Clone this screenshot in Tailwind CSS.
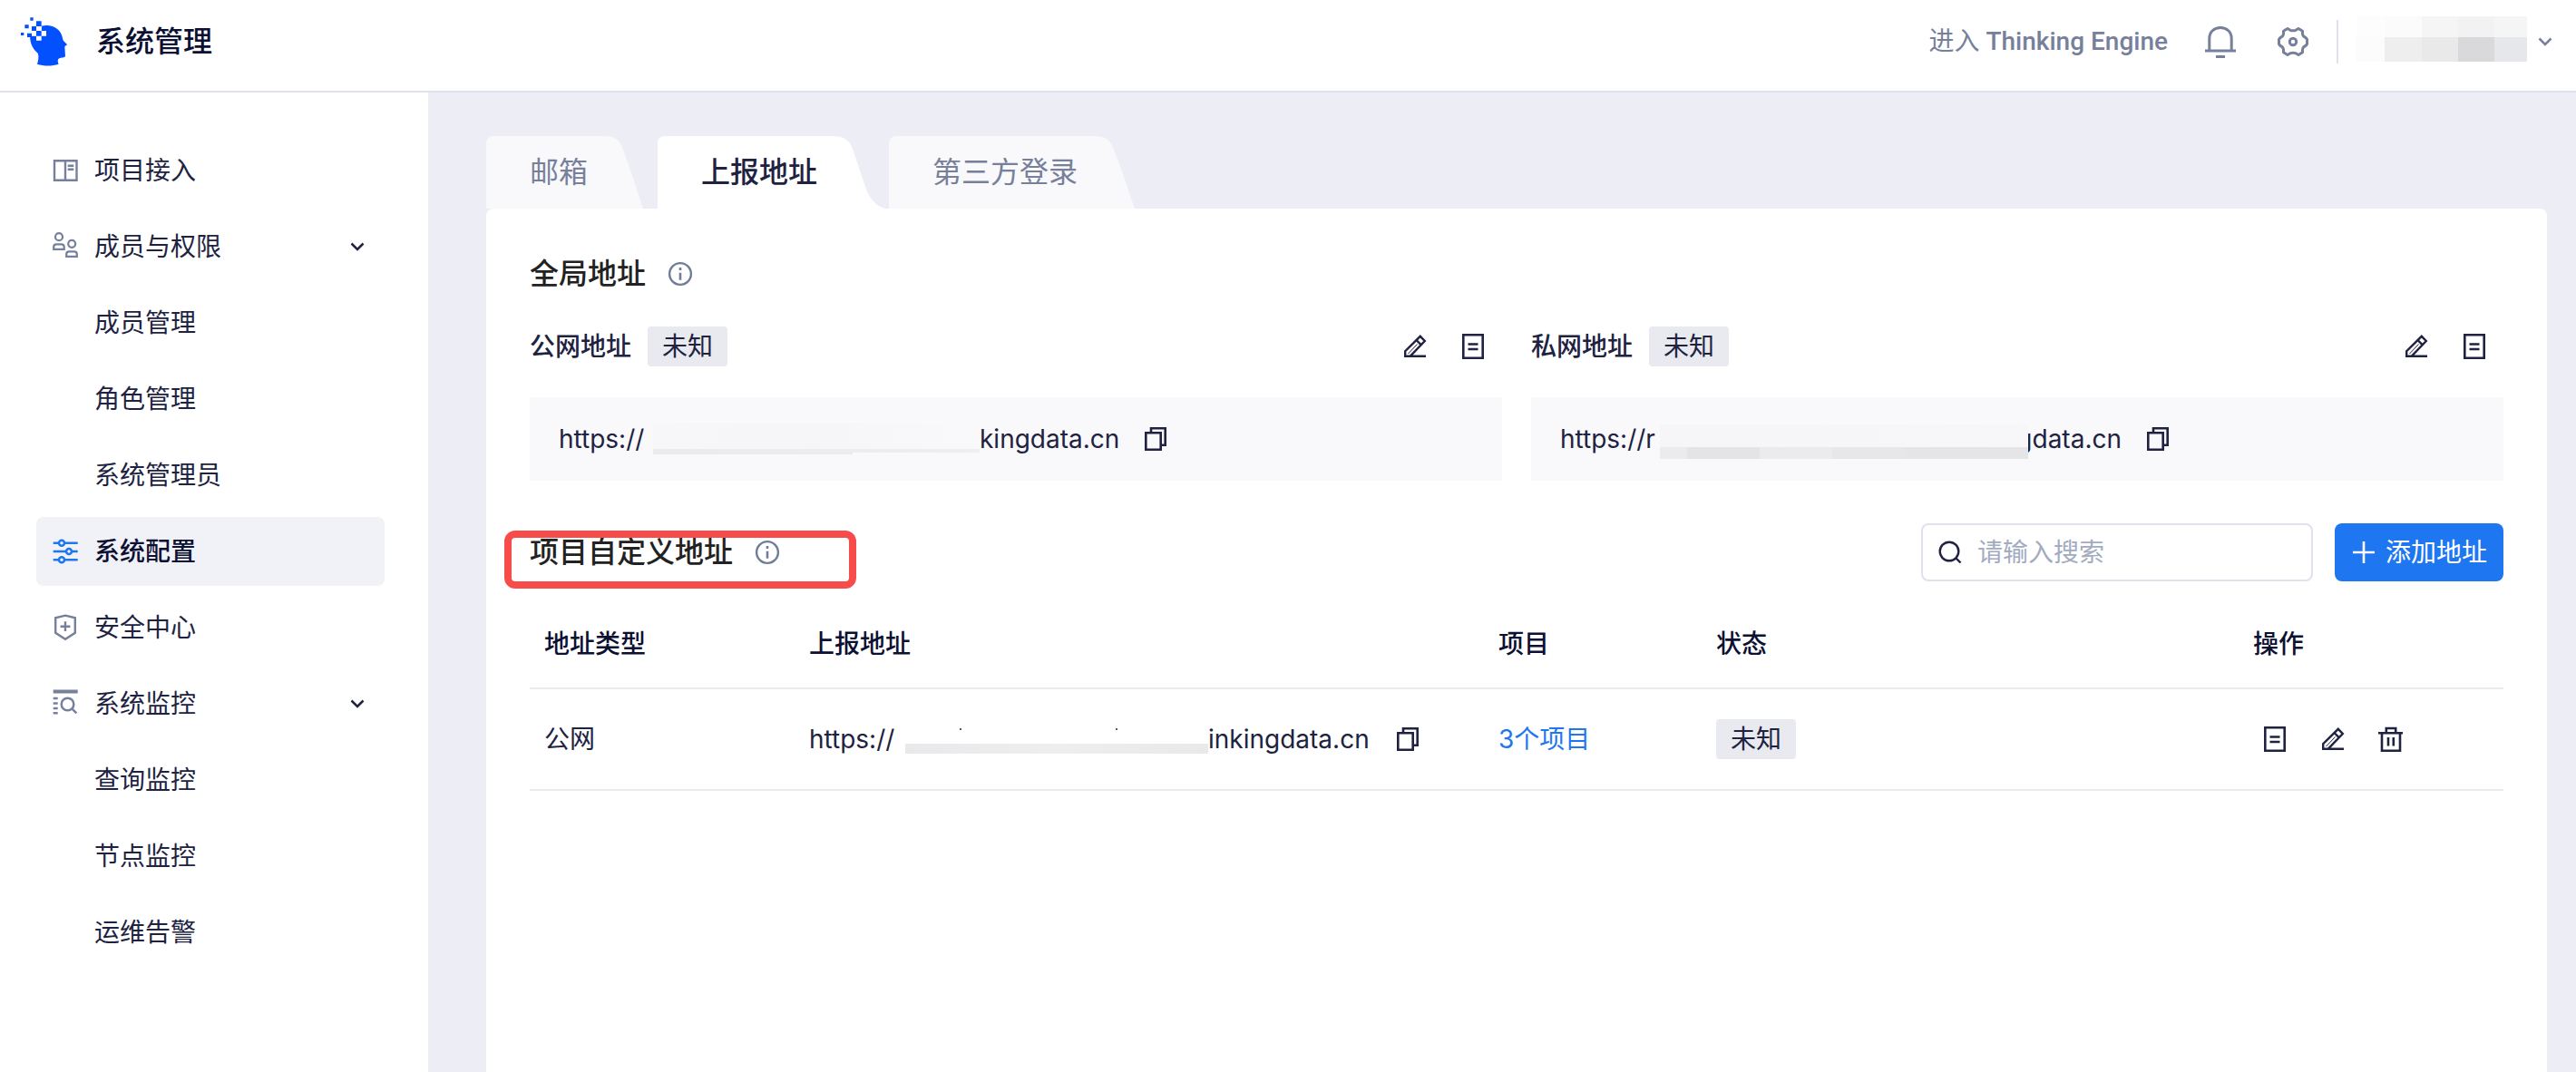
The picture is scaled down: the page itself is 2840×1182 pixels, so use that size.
<!DOCTYPE html>
<html lang="zh-CN">
<head>
<meta charset="utf-8">
<title>系统管理</title>
<script src="https://cdn.jsdelivr.net/npm/@tailwindcss/browser@4"></script>
</head>
<body class="flex min-h-screen flex-col bg-[#edeef5] font-['Inter','Noto_Sans_CJK_SC',sans-serif] text-[28px] leading-10 text-[#202241]">

<!-- Icon set -->
<svg class="hidden" aria-hidden="true">
  <symbol id="i-down" viewBox="0 0 20 20"><path d="M3.500 6.500 10 13l6.500-6.500" fill="none" stroke="currentColor" stroke-width="2.500"/></symbol>
  <symbol id="i-info" viewBox="0 0 28 28"><circle cx="14" cy="14" r="11.900" fill="none" stroke="currentColor" stroke-width="2.400"/><path d="M14 7v3M14 12.800v8" stroke="currentColor" stroke-width="2.600"/></symbol>
  <symbol id="i-edit" viewBox="0 0 32 32"><g fill="none" stroke="currentColor" stroke-width="2.400"><path d="M28 26.800H5.200v-5.600L21.800 4.800l5 5.200L10.600 26.800M17.600 9l5 5.200" /><path d="M8.500 24 18.500 13.500" stroke-width="1"/></g></symbol>
  <symbol id="i-doc" viewBox="0 0 32 32"><path d="M5.300 3.300h21.400v25.400H5.300zM10.500 13.500h11M10.500 19h11" fill="none" stroke="currentColor" stroke-width="2.600"/></symbol>
  <symbol id="i-copy" viewBox="0 0 32 32"><path d="M5.300 9.300h16.400v18.400H5.300zM11 9V4.300h15.700v18.400H22" fill="none" stroke="currentColor" stroke-width="2.600"/></symbol>
  <symbol id="i-trash" viewBox="0 0 32 32"><path d="M2 9.300h27M10.800 9V4h10.400v5M6 10v18.700h20V10M13 14v9.500M18.800 14v9.500" fill="none" stroke="currentColor" stroke-width="2.600"/></symbol>
</svg>

<header class="flex h-[102px] items-center border-b-2 border-[#dfe2ec] bg-white pr-6 pb-2 pl-5">
  <svg class="h-[60px] w-[58px]" viewBox="60 48 174 180" aria-hidden="true">
    <g fill="#0350ff">
      <path d="M137 86C172 79 203 94 208 131C211 138 222 145 222 148C222 151 214 151 214 155L216 186C212 192 199 190 193 195C190 200 191 206 194 212C172 219 145 219 123 212C126 202 129 190 126 178C121 170 100 160 99 118H120V102H137Z"/>
      <path d="M100 58h10v10h-10zM120 70h17v17h-17zM82 82h13v12H82zM105 87h15v15h-15zM69 108h10v9H69zM90 110h15v13H90z"/>
    </g>
    <path fill="#fff" d="M120 87h17v15h-17zM137 102h16v17h-16zM120 119h17v15h-17zM105 102h15v17h-15z"/>
  </svg>
  <h1 class="ml-7 text-[32px] leading-12 font-medium text-[#0c1033]">系统管理</h1>
  <div class="ml-auto flex items-center text-[#77809b]">
    <a href="#" class="font-['Roboto','Noto_Sans_CJK_SC',sans-serif] font-medium"><span class="font-normal">进入</span> Thinking Engine</a>
    <button type="button" aria-label="通知" class="ml-[38px]">
      <svg class="size-10" viewBox="0 0 40 40" fill="none" stroke="currentColor" stroke-width="3"><path d="M3 30h34M7.800 30V16.500C7.800 9 13 4.600 20 4.600S32.200 9 32.200 16.500V30M15 36.500h10"/></svg>
    </button>
    <button type="button" aria-label="设置" class="ml-10">
      <svg class="size-10" viewBox="0 0 40 40" fill="none" stroke="currentColor" stroke-width="3" stroke-linejoin="round"><path d="M14 5.500L17 7.300Q20 8.300 23 7.300L26 5.500L30.500 8.300V11.500Q31 14.500 34 15.500L35.500 17.500V22.500L34 24.500Q31 25.500 30.500 28.500V31.700L26 34.500L23 32.700Q20 31.700 17 32.700L14 34.500L9.500 31.700V28.500Q9 25.500 6 24.500L4.500 22.500V17.500L6 15.500Q9 14.500 9.500 11.500V8.300Z"/><circle cx="20" cy="20" r="3.700"/></svg>
    </button>
    <div class="ml-7 h-12 w-0.5 bg-[#dfe2ec]"></div>
    <button type="button" aria-label="账户" class="ml-5 flex items-center gap-2.5">
      <span class="-mt-1.5 grid h-[50px] w-[188px] grid-cols-[31px_41px_40px_40px_36px] grid-rows-[23px_27px]">
        <span class="bg-[#fdfdfd]"></span><span class="bg-[#fbfbfb]"></span><span class="bg-[#f5f5f5]"></span><span class="bg-[#f2f2f2]"></span><span class="bg-[#f5f5f5]"></span>
        <span class="bg-[#fcfcfd]"></span><span class="bg-[#eeeeef]"></span><span class="bg-[#e9e9ea]"></span><span class="bg-[#d9d9dc]"></span><span class="bg-[#e6e7ea]"></span>
      </span>
      <svg class="size-5"><use href="#i-down"/></svg>
    </button>
  </div>
</header>

<div class="flex flex-1">
  <nav class="w-[472px] shrink-0 bg-white pt-12 pr-12 pl-10">
    <ul class="flex flex-col gap-2">
      <li><a href="#" class="flex h-19 items-center gap-4 rounded-lg px-4">
        <svg class="size-8 text-[#77809b]" viewBox="0 0 32 32" fill="none" stroke="currentColor" stroke-width="2.400"><path d="M4 5.200h24.500v21.600H4zM16 5v22M18.700 10.700h6.600M18.700 14.700h6.600"/></svg>项目接入</a></li>
      <li><button type="button" class="flex h-19 w-full items-center gap-4 rounded-lg pr-5 pl-4">
        <svg class="size-8 text-[#77809b]" viewBox="0 0 32 32" fill="none" stroke="currentColor" stroke-width="2.200"><circle cx="9" cy="5.200" r="4"/><circle cx="23.200" cy="12.800" r="4"/><path d="M3.200 18.900v-2.500q0-3 3-3h5.500q3 0 3 3v2.500zM17.200 26.900v-2.500q0-3 3-3h5.600q3 0 3 3v2.500z"/></svg>成员与权限
        <svg class="ml-auto size-5"><use href="#i-down"/></svg></button></li>
      <li><a href="#" class="flex h-19 items-center rounded-lg pl-16">成员管理</a></li>
      <li><a href="#" class="flex h-19 items-center rounded-lg pl-16">角色管理</a></li>
      <li><a href="#" class="flex h-19 items-center rounded-lg pl-16">系统管理员</a></li>
      <li><a href="#" aria-current="page" class="flex h-19 items-center gap-4 rounded-lg bg-[#f1f2f8] px-4 font-medium text-[#0c1033]">
        <svg class="size-8 text-[#1e76f0]" viewBox="0 0 32 32" fill="none" stroke="currentColor" stroke-width="2.500"><path d="M2.700 6.700h6M15.300 6.700h14.400M2.700 16h14M23.300 16h6.400M2.700 25.300h6M15.300 25.300h14.400"/><circle cx="12" cy="6.700" r="3"/><circle cx="20" cy="16" r="3"/><circle cx="12" cy="25.300" r="3"/></svg>系统配置</a></li>
      <li><a href="#" class="flex h-19 items-center gap-4 rounded-lg px-4">
        <svg class="size-8 text-[#77809b]" viewBox="0 0 32 32" fill="none" stroke="currentColor" stroke-width="2.400"><path d="M16 2.700l10.800 2.600v16.500L16 28.800 5.200 21.800V5.300zM16 9.300v10.800M10.600 14.700h10.800"/></svg>安全中心</a></li>
      <li><button type="button" class="flex h-19 w-full items-center gap-4 rounded-lg pr-5 pl-4">
        <svg class="size-8 text-[#77809b]" viewBox="0 0 32 32" fill="none" stroke="currentColor" stroke-width="2.500"><path d="M2.700 2.500h27" stroke-width="4"/><path d="M2.700 10h5M2.700 15.500h5M2.700 21h5M2.700 26.300h5M23.300 21.300l5 5"/><circle cx="18.500" cy="16.500" r="6.800"/></svg>系统监控
        <svg class="ml-auto size-5"><use href="#i-down"/></svg></button></li>
      <li><a href="#" class="flex h-19 items-center rounded-lg pl-16">查询监控</a></li>
      <li><a href="#" class="flex h-19 items-center rounded-lg pl-16">节点监控</a></li>
      <li><a href="#" class="flex h-19 items-center rounded-lg pl-16">运维告警</a></li>
    </ul>
  </nav>

  <main class="flex min-w-0 flex-1 flex-col pt-12 pr-8 pl-16">
    <div role="tablist" class="flex h-20 text-[32px]">
      <button type="button" role="tab" aria-selected="false" class="mr-4 flex text-[#77809b]">
        <span class="flex h-20 items-center rounded-tl-lg bg-[#f9f9fc] pl-12">邮箱</span>
        <svg class="h-20 w-[61px] text-[#f9f9fc]" viewBox="0 0 61 80" fill="currentColor"><path d="M0 0H19C30 0 35 4 39 15Q42 22 61 80H0Z"/></svg>
      </button>
      <button type="button" role="tab" aria-selected="true" class="mr-1 flex font-medium">
        <span class="flex h-20 items-center rounded-tl-lg bg-white pl-12">上报地址</span>
        <svg class="h-20 w-[75px] text-white" viewBox="0 0 75 80" fill="currentColor"><path d="M0 0H16C29 0 35 4 39 14L53 56Q60 76 75 80H0Z"/></svg>
      </button>
      <button type="button" role="tab" aria-selected="false" class="flex text-[#77809b]">
        <span class="flex h-20 items-center rounded-tl-lg bg-[#f9f9fc] pl-12">第三方登录</span>
        <svg class="h-20 w-[63px] text-[#f9f9fc]" viewBox="0 0 63 80" fill="currentColor"><path d="M0 0H16C31 0 36 4 40 15Q44 24 63 80H0Z"/></svg>
      </button>
    </div>

    <div class="flex-1 rounded-t-lg bg-white px-12 pt-12">
      <div class="flex items-center gap-6">
        <h2 class="text-[32px] leading-12 font-medium text-[#222222]">全局地址</h2>
        <svg class="size-7 text-[#717c9a]"><use href="#i-info"/></svg>
      </div>

      <div class="mt-[34px] grid grid-cols-2 gap-8">
        <section>
          <div class="flex h-11 items-center pr-4">
            <h3 class="font-medium">公网地址</h3>
            <span class="ml-[18px] flex h-11 items-center rounded bg-[#e9eaf0] px-4">未知</span>
            <button type="button" aria-label="编辑" class="ml-auto"><svg class="size-8"><use href="#i-edit"/></svg></button>
            <button type="button" aria-label="详情" class="ml-8"><svg class="size-8"><use href="#i-doc"/></svg></button>
          </div>
          <div class="mt-[34px] flex h-[92px] items-center bg-[#f9f9fc] pl-8">
            <span class="w-[104px]">https://</span>
            <span class="flex h-[34px] w-[360px] flex-col">
              <span class="h-7 bg-linear-to-r from-[#f7f7f9] via-[#f6f6f8] to-[#f9f9fb]"></span>
              <span class="h-1 bg-linear-to-r from-[#ebebed] to-[#eeeef0]"></span>
              <span class="h-0.5 w-[220px] bg-[#ebebed]"></span>
            </span>
            <span>kingdata.cn</span>
            <button type="button" aria-label="复制" class="ml-6"><svg class="size-8"><use href="#i-copy"/></svg></button>
          </div>
        </section>
        <section>
          <div class="flex h-11 items-center pr-4">
            <h3 class="font-medium">私网地址</h3>
            <span class="ml-[18px] flex h-11 items-center rounded bg-[#e9eaf0] px-4">未知</span>
            <button type="button" aria-label="编辑" class="ml-auto"><svg class="size-8"><use href="#i-edit"/></svg></button>
            <button type="button" aria-label="详情" class="ml-8"><svg class="size-8"><use href="#i-doc"/></svg></button>
          </div>
          <div class="mt-[34px] flex h-[92px] items-center bg-[#f9f9fc] pl-8">
            <span class="w-[110px]">https://r</span>
            <span class="relative z-10 mt-1.5 flex h-[38px] w-[406px] flex-col">
              <span class="h-[25px] bg-linear-to-r from-[#f6f6f8] to-[#f7f7f9]"></span>
              <span class="flex h-[13px]"><span class="w-[30px] bg-[#ebebed]"></span><span class="w-20 bg-[#e4e4e6]"></span><span class="w-20 bg-[#ebebed]"></span><span class="w-20 bg-[#e7e7e9]"></span><span class="flex-1 bg-[#e5e5e8]"></span></span>
            </span>
            <span class="flex w-[103px] justify-end">gdata.cn</span>
            <button type="button" aria-label="复制" class="ml-6"><svg class="size-8"><use href="#i-copy"/></svg></button>
          </div>
        </section>
      </div>

      <div class="mt-[47px] flex h-16 items-center">
        <div class="relative flex items-center gap-6">
          <h2 class="text-[32px] leading-12 font-medium text-[#222222]">项目自定义地址</h2>
          <svg class="size-7 text-[#717c9a]"><use href="#i-info"/></svg>
          <div class="absolute top-0 -left-7 h-16 w-[388px] rounded-xl border-8 border-[#f74c49]"></div>
        </div>
        <label class="ml-auto flex h-16 w-[432px] items-center gap-4 rounded-lg border-2 border-[#dfe2ec] bg-white px-4">
          <svg class="size-7 shrink-0" viewBox="0 0 28 28" fill="none" stroke="currentColor" stroke-width="2.400"><circle cx="13" cy="13" r="10.300"/><path d="M20 20l5.500 5.500"/></svg>
          <input type="search" aria-label="搜索" placeholder="请输入搜索" class="min-w-0 flex-1 outline-none placeholder:text-[#a3abc0]">
        </label>
        <button type="button" class="ml-6 flex h-16 items-center gap-2.5 rounded-lg bg-[#1e76f0] px-[18px] text-white">
          <svg class="size-7" viewBox="0 0 28 28" stroke="currentColor" stroke-width="2.600"><path d="M2 14h24M14 2v24"/></svg>添加地址
        </button>
      </div>

      <table class="mt-5 w-full table-fixed text-left">
        <colgroup><col class="w-[292px]"><col><col class="w-60"><col class="w-[592px]"><col class="w-[292px]"></colgroup>
        <thead>
          <tr class="h-[98px] border-b-2 border-[#e9ebf1] text-[#0c1033]">
            <th class="px-4 font-medium">地址类型</th>
            <th class="px-4 font-medium">上报地址</th>
            <th class="px-4 font-medium">项目</th>
            <th class="px-4 font-medium">状态</th>
            <th class="px-4 font-medium">操作</th>
          </tr>
        </thead>
        <tbody>
          <tr class="h-28 border-b-2 border-[#e9ebf1]">
            <td class="px-4">公网</td>
            <td class="px-4">
              <div class="flex items-center">
                <span class="w-[106px]">https://</span>
                <span class="flex h-8 w-[334px] flex-col justify-between">
                  <span class="flex justify-between pr-[100px] pl-[60px]"><span class="mt-1 size-0.5 bg-[#55566c]"></span><span class="mt-1 size-0.5 bg-[#55566c]"></span></span>
                  <span class="h-[11px] bg-linear-to-r from-[#e9e9eb] via-[#eeeeef] to-[#e9e9ea]"></span>
                </span>
                <span>inkingdata.cn</span>
                <button type="button" aria-label="复制" class="ml-[26px]"><svg class="size-8"><use href="#i-copy"/></svg></button>
              </div>
            </td>
            <td class="px-4"><a href="#" class="text-[#1e76f0]">3个项目</a></td>
            <td class="px-4"><span class="flex h-11 w-22 items-center justify-center rounded bg-[#e9eaf0]">未知</span></td>
            <td class="px-6">
              <div class="flex gap-8">
                <button type="button" aria-label="详情"><svg class="size-8"><use href="#i-doc"/></svg></button>
                <button type="button" aria-label="编辑"><svg class="size-8"><use href="#i-edit"/></svg></button>
                <button type="button" aria-label="删除"><svg class="size-8"><use href="#i-trash"/></svg></button>
              </div>
            </td>
          </tr>
        </tbody>
      </table>
    </div>
  </main>
</div>
</body>
</html>
